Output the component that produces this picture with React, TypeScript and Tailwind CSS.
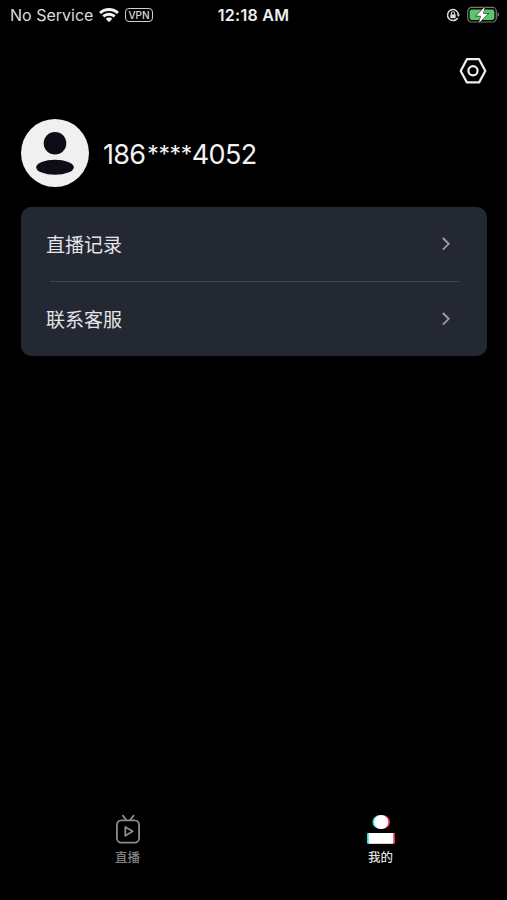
import type { ReactNode } from 'react';

const menuItems = ['直播记录', '联系客服'];

function WifiIcon() {
  return (
    <svg width="20" height="15" viewBox="0 0 20 15" fill="#f2f2f2">
      <path d="M10 0C6.200 0 2.700 1.500 0 4L2 6.100C4.100 4.100 6.900 2.900 10 2.900S15.900 4.100 18 6.100L20 4C17.300 1.500 13.800 0 10 0Z" />
      <path d="M10 4.800C7.500 4.800 5.200 5.800 3.400 7.400L5.400 9.500C6.600 8.400 8.200 7.700 10 7.700S13.400 8.400 14.600 9.500L16.600 7.400C14.800 5.800 12.500 4.800 10 4.800Z" />
      <path d="M10 9.500C8.700 9.500 7.600 10 6.700 10.800L10 14.300L13.300 10.800C12.400 10 11.300 9.500 10 9.500Z" />
    </svg>
  );
}

function RotationLockIcon() {
  return (
    <svg width="14" height="14" viewBox="0 0 14 14" fill="none" stroke="#d8d8d8">
      <path d="M11.700 10A5.500 5.500 0 1 1 12.500 6.400" strokeWidth="1.500" />
      <path d="M10.700 6.300H14L12.300 9Z" fill="#d8d8d8" stroke="none" />
      <rect x="4.300" y="6.300" width="5.400" height="3.900" rx="0.600" fill="#d8d8d8" stroke="none" />
      <path d="M5.400 6.500V5.300A1.600 1.600 0 0 1 8.600 5.300V6.500" strokeWidth="1.100" />
    </svg>
  );
}

function BatteryIcon() {
  return (
    <svg width="32" height="18" viewBox="0 0 32 18">
      <rect x="0.700" y="1.400" width="28.600" height="14.600" rx="4" fill="none" stroke="#777" strokeWidth="1.200" />
      <rect x="2.600" y="3.400" width="24.800" height="10.600" rx="2.300" fill="#5bc766" />
      <path d="M30.500 6.600C31.500 7 32 7.800 32 8.700S31.500 10.400 30.500 10.800Z" fill="#777" />
      <path d="M17.800 0.900L9.300 9.800H14L12 16.700L21 7.700H16Z" fill="#fff" stroke="#1b3a1e" strokeWidth="1.200" paintOrder="stroke" />
    </svg>
  );
}

function SettingsIcon() {
  return (
    <svg width="28" height="28" viewBox="0 0 28 28" fill="none" stroke="#eee" strokeWidth="2.200">
      <path d="M7.900 2.200H20.100L26.300 14L20.100 25.400H7.900L1.700 14Z" strokeLinejoin="round" />
      <circle cx="14" cy="13.800" r="4.600" />
    </svg>
  );
}

function Avatar() {
  return (
    <svg width="68" height="68" viewBox="0 0 68 68">
      <circle cx="34" cy="34" r="34" fill="#f0f0f0" />
      <circle cx="34" cy="24.300" r="11.300" fill="#0d0d17" />
      <ellipse cx="34" cy="48.300" rx="18.800" ry="7.500" fill="#0d0d17" />
    </svg>
  );
}

function Chevron() {
  return (
    <svg width="8" height="14" viewBox="0 0 8 14" fill="none" stroke="#9a9da4" strokeWidth="1.900">
      <path d="M0.900 1L6.700 6.800L0.900 12.600" />
    </svg>
  );
}

function LiveIcon() {
  return (
    <svg width="28" height="30" viewBox="0 0 28 30" fill="none" stroke="#8c8c8c" strokeWidth="1.800" strokeLinecap="round" strokeLinejoin="round">
      <rect x="2.900" y="6.400" width="22.200" height="22.300" rx="4.500" />
      <path d="M8.800 1.600L12.300 6M19.600 1.600L16.100 6" />
      <path d="M11.300 12.900V21.800L18.700 17.300Z" />
    </svg>
  );
}

// White shape with cyan and red fringes on either side
function ProfileIcon() {
  return (
    <svg width="28" height="30" viewBox="0 0 28 30">
      <g fill="#25e5e0">
        <ellipse cx="13.300" cy="8" rx="7.900" ry="6.900" />
        <rect x="0" y="19" width="25" height="10.700" rx="0.800" />
      </g>
      <g fill="#f5224e">
        <ellipse cx="15.200" cy="8" rx="7.900" ry="6.900" />
        <rect x="3" y="19" width="25" height="10.700" rx="0.800" />
      </g>
      <ellipse cx="14.200" cy="8" rx="7.200" ry="7" fill="#fff" />
      <rect x="1.700" y="19" width="24.600" height="10.700" fill="#fff" />
    </svg>
  );
}

function Tab({ icon, label, active }: { icon: ReactNode; label: string; active?: boolean }) {
  return (
    <button className="flex flex-1 flex-col items-center">
      {icon}
      <span className={`mt-[5px] text-[12.500px] leading-[18px] font-medium ${active ? 'text-[#dedede]' : 'text-[#828282]'}`}>
        {label}
      </span>
    </button>
  );
}

export default function App() {
  return (
    <div className="flex h-[900px] w-[507px] flex-col overflow-hidden bg-black font-['Inter','Noto_Sans_CJK_SC',sans-serif] text-white">
      <header className="grid h-[30px] grid-cols-[1fr_auto_1fr] items-center pr-2 pl-[10px] text-[16px] leading-[30px]">
        <div className="flex items-center">
          <span className="w-[89px] whitespace-nowrap text-[#dcdcdc]">No Service</span>
          <WifiIcon />
          <span className="ml-[6px] flex h-[14px] w-[28px] items-center justify-center rounded-[4px] border border-[#cfcfcf] text-[10px] leading-none font-medium text-[#dcdcdc]">
            VPN
          </span>
        </div>
        <span className="pr-[2px] font-semibold tracking-[0.3px] text-[#efefef]">12:18 AM</span>
        <div className="flex items-center justify-end gap-[7px]">
          <RotationLockIcon />
          <BatteryIcon />
        </div>
      </header>

      <div className="mt-[27px] flex justify-end pr-5">
        <button aria-label="设置">
          <SettingsIcon />
        </button>
      </div>

      <section className="mt-[34px] flex items-center gap-[14px] px-[21px]">
        <Avatar />
        <h1 className="flex pt-[3px] text-[27px] leading-[34px] tracking-[-0.7px] text-[#f2f2f2]">
          <span>186</span>
          <span className="ml-[2px] text-[23px] leading-[32px] tracking-[-0.4px]">****</span>
          <span>4052</span>
        </h1>
      </section>

      <section className="mr-5 ml-[21px] mt-5 h-[149px] rounded-[10px] bg-[#242832]">
        {menuItems.map((item, i) => (
          <div key={item}>
            {i > 0 && <div className="mr-7 ml-[29px] h-px bg-[#3f434c]" />}
            <button className="flex h-[74px] w-full items-center justify-between pr-[37px] pl-[25px]">
              <span className="pt-[5px] text-[19px] text-[#e4e5e7]">{item}</span>
              <Chevron />
            </button>
          </div>
        ))}
      </section>

      <nav className="mt-auto flex pb-[33px] pl-px">
        <Tab icon={<LiveIcon />} label="直播" />
        <Tab icon={<ProfileIcon />} label="我的" active />
      </nav>
    </div>
  );
}
